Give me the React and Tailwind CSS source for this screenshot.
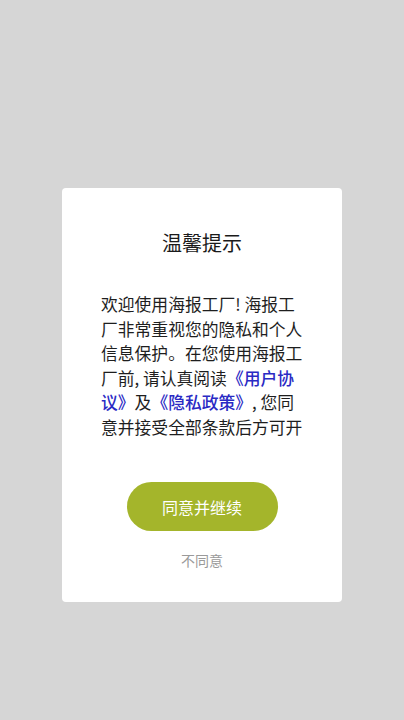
import React from "react";

const App = () => {
  return (
    <div
      className="min-h-screen bg-[#d6d6d6] px-[62px] pt-[188px]"
      style={{ fontFamily: '"Noto Sans CJK SC", "Noto Sans", sans-serif' }}
    >
      {/* Privacy dialog */}
      <div className="flex h-[414px] w-[280px] flex-col items-center rounded-[4px] bg-white pt-[41px] pb-[32px]">
        <h1 className="text-[20px] leading-[28px] text-[#1a1a1a]">温馨提示</h1>

        <div className="mt-[35px] ml-[4px] h-[147px] w-[206px] overflow-hidden text-[16.8px] leading-[24.5px] text-[#1e1e1e]">
          欢迎使用海报工厂! 海报工厂非常重视您的隐私和个人信息保护。在您使用海报工厂前, 请认真阅读
          <span className="font-medium text-[#2a2ac4]">《用户协议》</span>及
          <span className="font-medium text-[#2a2ac4]">《隐私政策》</span>
          , 您同意并接受全部条款后方可开始使用海报工厂。
        </div>

        <button className="mt-[43px] h-[49px] w-[151px] rounded-full bg-[#a4b52b] text-[16px] text-white">
          同意并继续
        </button>
        <button className="mt-[19px] text-[14px] leading-[20px] text-[#9a9a9a]">
          不同意
        </button>
      </div>
    </div>
  );
};

export default App;
